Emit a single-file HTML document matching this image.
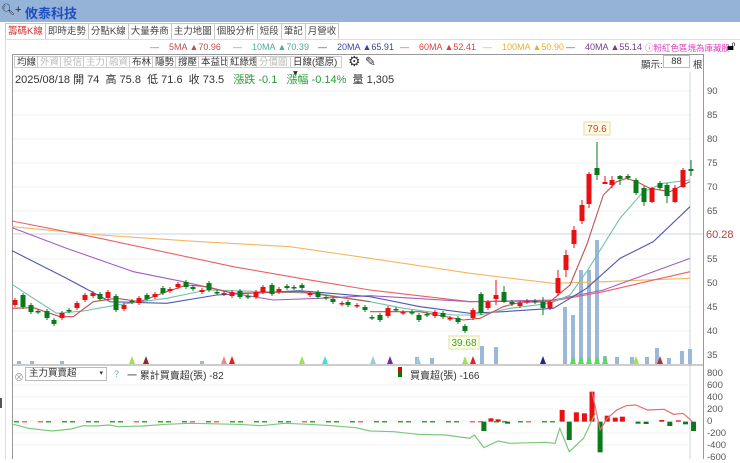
<!DOCTYPE html>
<html><head><meta charset="utf-8"><style>
*{margin:0;padding:0;box-sizing:border-box}
body{width:740px;height:459px;overflow:hidden;background:#fff;font-family:"Liberation Sans","Noto Sans CJK TC",sans-serif;position:relative;font-size:11px;color:#333}
.hdr{position:absolute;left:0;top:0;width:740px;height:22px;background:#95b3d7}
.hdr .t{position:absolute;left:25px;top:3px;font-size:13px;font-weight:bold;color:#1f4fc0}
.tabs{position:absolute;left:5px;top:23px;height:17px;display:flex}
.tab{border:1px solid #c8c8c8;border-bottom:none;padding:0 2px;height:17px;line-height:16px;font-size:9.5px;color:#444;margin-right:-1px;background:#fff}
.tab.a{color:#d03030}
.ma{position:absolute;top:42px;font-size:9px;white-space:nowrap}
.tb{position:absolute;top:56px;height:12px;font-size:9.5px;line-height:11px;border:1px solid #ccc;padding:0 2px;color:#333;background:#fff}
.tb.g{color:#bbb}
.ax{position:absolute;left:707px;font-size:9.5px;color:#555}
</style></head><body>
<div class="hdr"><span style="position:absolute;left:1px;top:3px;font-size:11px;color:#223">🔍︎+</span><span class="t">攸泰科技</span></div>
<div style="position:absolute;left:5px;top:40px;width:1px;height:419px;background:#ddd"></div>
<div class="tabs">
<div class="tab a">籌碼K線</div><div class="tab">即時走勢</div><div class="tab">分點K線</div><div class="tab">大量券商</div><div class="tab">主力地圖</div><div class="tab">個股分析</div><div class="tab">短段</div><div class="tab">筆記</div><div class="tab">月營收</div>
</div>
<div style="position:absolute;left:5px;top:39px;width:735px;height:1px;background:#ddd"></div>
<div class="ma" style="left:150px;color:#c0504d">—&nbsp;&nbsp;&nbsp;&nbsp;5MA ▲70.96</div>
<div class="ma" style="left:233px;color:#4bac9a">—&nbsp;&nbsp;&nbsp;&nbsp;10MA ▲70.39</div>
<div class="ma" style="left:318px;color:#3a44a0">—&nbsp;&nbsp;&nbsp;&nbsp;20MA ▲65.91</div>
<div class="ma" style="left:400px;color:#e04040">—&nbsp;&nbsp;&nbsp;&nbsp;60MA ▲52.41</div>
<div class="ma" style="left:483px;color:#e8b030">—&nbsp;&nbsp;&nbsp;&nbsp;100MA ▲50.90</div>
<div class="ma" style="left:566px;color:#7a3a90">—&nbsp;&nbsp;&nbsp;&nbsp;40MA ▲55.14</div>
<div class="ma" style="left:645px;color:#e040c0;font-size:8.5px">ⓘ粉紅色區塊為庫藏股</div>
<div class="ma" style="left:727px;top:38px;color:#000;font-size:13px">🔓︎</div>
<div style="position:absolute;left:12px;top:54px;width:692px;height:405px;border:1px solid #999;border-bottom:none"></div>
<div class="tb" style="left:14px">均線</div><div class="tb g" style="left:37px">外資</div><div class="tb g" style="left:60px">投信</div><div class="tb g" style="left:83px">主力</div><div class="tb g" style="left:106px">融資</div><div class="tb" style="left:129px">布林</div><div class="tb" style="left:152px">隱勢</div><div class="tb" style="left:175px">撐壓</div><div class="tb" style="left:198px">本益比</div><div class="tb" style="left:227px">紅綠燈</div><div class="tb g" style="left:256px">分價圖</div>
<div class="tb" style="left:290px;width:52px">日線(還原) ▾</div>
<div style="position:absolute;left:348px;top:53px;font-size:14px;color:#333">⚙</div>
<div style="position:absolute;left:365px;top:54px;font-size:13px;color:#333">✎</div>
<div style="position:absolute;left:641px;top:57px;font-size:9.5px">顯示:</div>
<div style="position:absolute;left:663px;top:55px;width:27px;height:13px;border:1px solid #bbb;font-size:9.5px;text-align:center;line-height:11px">88</div>
<div style="position:absolute;left:693px;top:57px;font-size:9.5px">根</div>
<div style="position:absolute;left:15px;top:71px;font-size:11px;color:#333;white-space:nowrap">2025/08/18 開 74&nbsp; 高 75.8&nbsp; 低 71.6&nbsp; 收 73.5 &nbsp;&nbsp;<span style="color:#2a9a3a">漲跌 -0.1 &nbsp;&nbsp;漲幅 -0.14%</span>&nbsp; 量 1,305</div>
<div class="ax" style="top:86px">90</div><div class="ax" style="top:110px">85</div><div class="ax" style="top:134px">80</div><div class="ax" style="top:158px">75</div><div class="ax" style="top:182px">70</div><div class="ax" style="top:206px">65</div><div class="ax" style="top:254px">55</div><div class="ax" style="top:278px">50</div><div class="ax" style="top:302px">45</div><div class="ax" style="top:326px">40</div><div class="ax" style="top:350px">35</div>
<div class="ax" style="top:229px;left:706px;font-size:11px;color:#b04040">60.28</div>
<div class="ax" style="top:368px">800</div><div class="ax" style="top:380px">600</div><div class="ax" style="top:392px">400</div><div class="ax" style="top:404px">200</div><div class="ax" style="top:416px">0</div><div class="ax" style="top:428px">-200</div><div class="ax" style="top:440px">-400</div><div class="ax" style="top:452px">-600</div>
<svg id="s" width="740" height="459" style="position:absolute;left:0;top:0"></svg>
<div style="position:absolute;left:14px;top:369px;font-size:10px;color:#999">⊗</div>
<div style="position:absolute;left:25px;top:367px;width:82px;height:14px;border:1px solid #bbb;font-size:9.5px;line-height:12px;padding-left:3px">主力買賣超<span style="position:absolute;right:3px;font-size:7px">▾</span></div>
<div style="position:absolute;left:114px;top:369px;font-size:9px;color:#6aa">?</div>
<div style="position:absolute;left:127px;top:367px;font-size:10px;white-space:nowrap">一 累計買賣超(張) -82</div>
<div style="position:absolute;left:398px;top:367px;width:4px;height:5px;background:#e00"></div><div style="position:absolute;left:398px;top:372px;width:4px;height:5px;background:#070"></div>
<div style="position:absolute;left:410px;top:367px;font-size:10px;white-space:nowrap">買賣超(張) -166</div>
<div style="position:absolute;left:0;top:398px;width:2px;height:10px;background:#555"></div>
<script>
var s=document.getElementById('s'),h='';
function L(x1,y1,x2,y2,c,w){h+='<line x1="'+x1+'" y1="'+y1+'" x2="'+x2+'" y2="'+y2+'" stroke="'+c+'" stroke-width="'+(w||1)+'"/>';}
function R(x,y,w,hh,c){h+='<rect x="'+x+'" y="'+y+'" width="'+w+'" height="'+hh+'" fill="'+c+'"/>';}
[91,115,139,163,187,211,259,283,307,331].forEach(function(y){L(13,y,690,y,'#f0f0f0')});
L(13,234,703,234,'#c8d4e0');L(690,72,690,459,'#c8d4e0');L(13,365,703,365,'#999');
[385,397,409,421,433,445].forEach(function(y){L(13,y,690,y,'#f3f3f3')});
R(563,307,4,57,'#9bb8d8');R(571,315,4,49,'#9bb8d8');R(579,270,4,94,'#9bb8d8');R(587,270,4,94,'#9bb8d8');R(595,240,4,124,'#9bb8d8');
[[480,346],[494,347],[655,348],[680,351],[688,349],[17,361],[30,361],[60,361],[200,361],[415,357],[430,358],[603,356],[615,357],[630,357],[645,357],[667,358]].forEach(function(v){R(v[0],v[1],4,364-v[1],'#9bb8d8')});
var tr=[[132,'#9de24f'],[146,'#8b2b2b'],[224,'#e88'],[232,'#d22'],[302,'#9de24f'],[325,'#4dd'],[373,'#9cd'],[390,'#7b2a9b'],[418,'#9cd'],[465,'#9de24f'],[473,'#d22'],[543,'#1a2a8a'],[573,'#5d5'],[581,'#5d5'],[589,'#5d5'],[597,'#5d5'],[605,'#5d5'],[636,'#9de24f'],[660,'#a33']];
tr.forEach(function(t){h+='<polygon points="'+(t[0]-3)+',364 '+(t[0]+3)+',364 '+t[0]+',356" fill="'+t[1]+'"/>'});
function P(pts,off,c){var a=pts.map(function(p){return (p[0]/3+off)+','+(p[1]/3+85)});h+='<polyline fill="none" stroke="'+c+'" stroke-width="1.1" points="'+a.join(' ')+'"/>';}
P([[36,425],[300,450],[600,470],[870,485],[1110,520]],0,'#f0b860');P([[0,520],[300,565],[550,595],[700,590],[960,580]],370,'#f0b860');
P([[36,408],[300,460],[700,545],[900,580],[1110,615]],0,'#e86060');P([[0,615],[300,650],[550,648],[700,620],[960,560]],370,'#e86060');
P([[36,428],[200,490],[400,560],[550,590],[700,625],[820,645],[960,640],[1110,632]],0,'#a060c0');P([[0,632],[300,650],[550,645],[700,615],[960,520]],370,'#a060c0');
P([[36,497],[200,580],[330,650],[500,655],[650,630],[900,617],[1110,635]],0,'#5058b0');P([[0,635],[150,665],[300,685],[400,680],[550,670],[650,610],[750,520],[850,470],[960,365]],370,'#5058b0');
P([[36,598],[100,640],[170,685],[250,678],[350,660],[500,640],[620,615],[800,620],[950,625],[1110,650]],0,'#6cc0b0');P([[0,650],[100,670],[250,690],[330,690],[420,670],[540,655],[600,630],[650,560],[700,480],[750,400],[820,320],[880,295],[960,285]],370,'#6cc0b0');
P([[36,670],[100,668],[180,695],[220,695],[280,650],[350,640],[420,650],[500,620],[560,600],[620,605],[700,625],[900,620],[1110,650]],0,'#c05050');P([[0,680],[150,680],[280,705],[330,700],[400,665],[450,652],[540,650],[600,600],[650,480],[700,330],[740,290],[770,280],[800,290],[840,310],[900,320],[960,290]],370,'#c05050');
var G='#0a7a1a',Rd='#e81010';
var left=[[15,300,305,Rd],[23,295,307,G],[31,305,312,G],[38,311,312,G],[47,311,318,G],[54,320,324,G],[62,313,318,Rd],[69,310,311,G],[77,303,308,Rd],[85,295,300,Rd],[93,293,296,Rd],[100,294,299,G],[108,292,298,Rd],[116,296,310,G],[124,305,309,Rd],[132,301,302,G],[139,298,303,Rd],[147,295,299,G],[155,294,297,Rd],[163,288,293,G],[170,289,291,Rd],[178,284,287,Rd],[186,282,287,G],[193,287,289,G],[202,290,292,Rd],[209,283,290,G],[217,292,293,G],[224,293,294,Rd],[232,292,296,Rd],[240,291,297,G],[248,296,297,G],[256,292,297,Rd],[263,287,292,Rd],[272,285,294,G],[279,289,292,Rd],[287,286,288,G],[294,287,288,G],[302,285,288,G],[310,293,295,Rd],[318,292,297,G],[326,297,298,G],[333,299,302,G],[342,303,304,Rd],[348,302,305,G],[357,305,306,Rd],[365,307,310,G],
[372,317,318,G],[380,315,320,G],[388,308,316,Rd],[396,309,310,G],[403,312,313,Rd],[412,312,313,G],[419,315,320,G],[427,314,315,G],[435,312,316,Rd],[443,313,317,G],[450,318,319,Rd],[458,318,322,G],[465,326,331,G],[473,310,318,Rd],[481,294,313,G],[488,302,308,Rd],[496,295,299,Rd,280,305],[504,292,302,G,286,303],[512,302,304,G],[520,303,306,Rd],[527,301,302,Rd],[535,301,302,G],[543,302,308,G,297,315],[550,302,308,Rd],
[558,278,293,Rd,270,296],[566,255,270,Rd,250,277],[574,230,244,Rd,226,248],[582,205,221,Rd,200,224],[589,174,204,Rd,172,208],[597,168,175,G,142,180],[605,182,184,Rd,176,184],[612,180,185,Rd,176,188],[620,176,179,G,175,185],[628,176,178,G],[636,180,193,G,178,195],[644,188,202,G,186,206],[652,188,202,Rd,187,203],[660,183,188,G],[667,185,196,G,183,203],[675,188,202,Rd,185,203],[683,170,187,Rd,168,188],[691,169,171,G,160,176]];
left.forEach(function(c){var wt=c[4]||c[1]-2,wb=c[5]||c[2]+2;L(c[0],wt,c[0],wb,c[3]);R(c[0]-2.5,c[1],5,Math.max(1.5,c[2]-c[1]),c[3]);});
h+='<rect x="584" y="122" width="26" height="13" fill="#fffbe8" stroke="#e8d8a0"/><text x="597" y="132" font-size="10" fill="#d04a2a" text-anchor="middle" font-family="Liberation Sans">79.6</text>';
h+='<rect x="449" y="336" width="30" height="13" fill="#fbffe8" stroke="#d8e0a0"/><text x="464" y="346" font-size="10" fill="#4a9a2a" text-anchor="middle" font-family="Liberation Sans">39.68</text>';
function X(v){return v/2.108}function Y(v){return v/3+355}
var k=0;for(var x=14;x<560;x+=8){k++;if(k%3==0)continue;R(x,Y(198),5,1.5,(k%7==2||k%11==4)?'#f66':'#3a3')}
[[1020,200,228,G],[1035,190,200,Rd],[1050,193,200,Rd],[1070,200,206,G],[1185,165,200,Rd],[1200,200,255,G],[1215,172,200,Rd],[1232,175,200,Rd],[1248,110,200,Rd],[1265,200,292,G],[1280,182,200,Rd],[1297,188,200,Rd],[1312,185,200,Rd],[1345,200,206,G],[1362,200,207,G],[1395,195,200,Rd],[1412,200,213,G],[1430,196,200,Rd],[1445,200,208,G],[1462,200,228,G]].forEach(function(b){R(X(b[0])-2.5,Y(b[1]),5,Y(b[2])-Y(b[1]),b[3])});
var cl=[[28,208],[60,220],[110,228],[150,222],[175,212],[200,213],[230,210],[250,215],[300,213],[350,208],[400,205],[500,208],[550,212],[600,205],[650,208],[700,212],[750,218],[780,228],[830,230],[880,238],[940,240],[990,250],[1000,240],[1020,278],[1050,258],[1075,265],[1150,262],[1170,265],[1180,220],[1200,290],[1230,250],[1255,175]];
h+='<polyline fill="none" stroke="#7ac87a" stroke-width="1.2" points="'+cl.map(function(p){return X(p[0])+','+Y(p[1])}).join(' ')+'"/>';
var cr=[[1248,110],[1265,225],[1280,190],[1300,165],[1320,152],[1340,150],[1365,165],[1400,163],[1420,178],[1440,175],[1460,200]];
h+='<polyline fill="none" stroke="#e07070" stroke-width="1.2" points="'+cr.map(function(p){return X(p[0])+','+Y(p[1])}).join(' ')+'"/>';
s.innerHTML=h;
</script>
</body></html>
